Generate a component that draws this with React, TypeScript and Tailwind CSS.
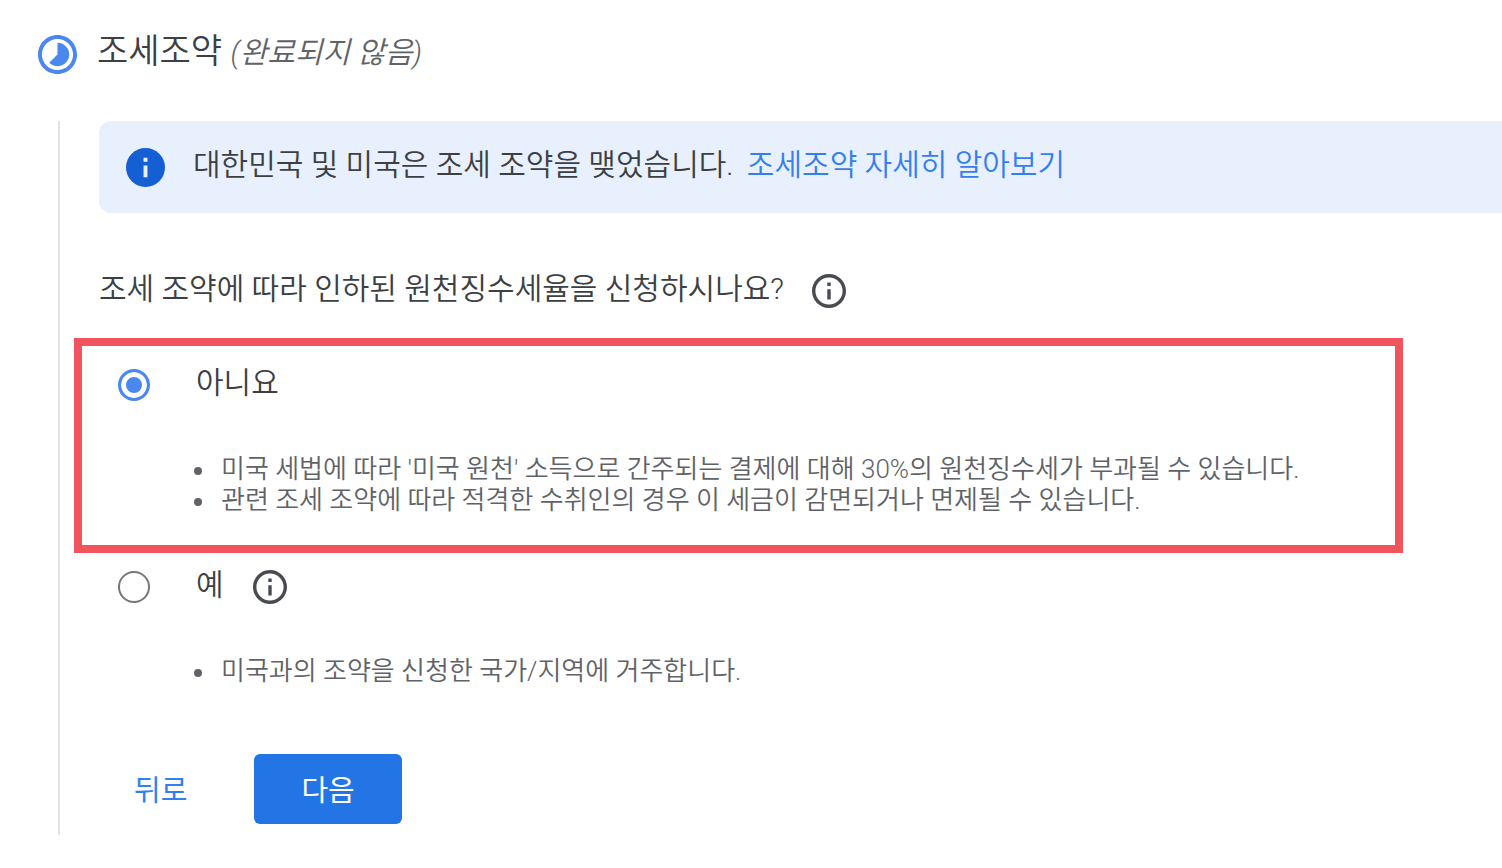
import { useState, type ReactNode } from "react";

function TimelapseIcon() {
  return (
    <svg viewBox="2 2 20 20" className="size-[39px] shrink-0 fill-[#4a88f0]" aria-hidden="true">
      <path d="M16.24 7.76A5.974 5.974 0 0 0 12 6v6l-4.24 4.24c2.34 2.34 6.14 2.34 8.49 0a5.99 5.99 0 0 0-.01-8.48zM12 2C6.48 2 2 6.48 2 12s4.48 10 10 10 10-4.48 10-10S17.52 2 12 2zm0 18c-4.42 0-8-3.58-8-8s3.58-8 8-8 8 3.58 8 8-3.58 8-8 8z" />
    </svg>
  );
}

function InfoFilledIcon() {
  return (
    <svg viewBox="2 2 20 20" className="size-[39px] shrink-0" aria-hidden="true">
      <circle cx="12" cy="12" r="10" fill="#145fd4" />
      <path fill="#e8f0fe" d="M11 7h2v2h-2zM11 11h2v6h-2z" />
    </svg>
  );
}

function InfoButton() {
  return (
    <button type="button" className="size-[34px] shrink-0" aria-label="정보">
      <svg viewBox="2 2 20 20" className="size-full fill-[#484b4f]" aria-hidden="true">
        <path d="M11 7h2v2h-2zm0 4h2v6h-2zm1-9C6.48 2 2 6.48 2 12s4.48 10 10 10 10-4.48 10-10S17.52 2 12 2zm0 18c-4.41 0-8-3.59-8-8s3.59-8 8-8 8 3.59 8 8-3.59 8-8 8z" />
      </svg>
    </button>
  );
}

const radioClass =
  "size-8 shrink-0 appearance-none rounded-full border-2 border-[#74777a] bg-white checked:border-3 checked:border-[#4a88f0] checked:bg-[#4a88f0] checked:shadow-[inset_0_0_0_5px_white]";

function Notes({ children }: { children: ReactNode }) {
  return (
    <ul className="mt-[49px] space-y-px pl-[76px] text-[26px] leading-[30px] text-[#5f6368]">
      {children}
    </ul>
  );
}

function Note({ children }: { children: string }) {
  return (
    <li className="flex gap-[19px]">
      <span className="mt-[13px] size-2 shrink-0 rounded-full bg-[#5f6368]" />
      <span>{children}</span>
    </li>
  );
}

export default function App() {
  const [claim, setClaim] = useState("no");

  return (
    <main className="min-h-screen bg-white pt-[33px] pl-[38px] pb-8 font-[Roboto,'Noto_Sans_CJK_KR',sans-serif] text-[30px] leading-10 font-[350] text-[#3c4043]">
      <h2 className="flex items-center gap-[20px]">
        <TimelapseIcon />
        <span className="pb-1 text-[34px] leading-9">
          조세조약 <em className="text-[30px] text-[#5f6368]">(완료되지 않음)</em>
        </span>
      </h2>

      <div className="mt-[46px] ml-5 border-l-2 border-[#e2e2e9] pb-[11px] pl-[39px]">
        <div className="flex items-center gap-[28px] rounded-l-xl bg-[#e8f0fe] py-[26px] pl-[27px]">
          <InfoFilledIcon />
          <p className="pb-1 leading-9">
            대한민국 및 미국은 조세 조약을 맺었습니다.{" "}
            <a href="#treaty" className="ml-1.5 text-[#347ff0]">
              조세조약 자세히 알아보기
            </a>
          </p>
        </div>

        <form>
          <fieldset>
            <legend className="flex items-center gap-[28px] pt-[58px]">
              <span className="pb-1 leading-9">조세 조약에 따라 인하된 원천징수세율을 신청하시나요?</span>
              <InfoButton />
            </legend>

            <div className="mt-[27px] mr-[99px] -ml-[25px] border-8 border-[#f2545d] px-[36px] pt-[19px] pb-[30px]">
              <div className="flex items-center gap-[46px]">
                <input id="claim-no" type="radio" name="claim" className={radioClass} checked={claim === "no"} onChange={() => setClaim("no")} />
                <label htmlFor="claim-no" className="pb-1 leading-9">아니요</label>
              </div>
              <Notes>
                <Note>미국 세법에 따라 '미국 원천' 소득으로 간주되는 결제에 대해 30%의 원천징수세가 부과될 수 있습니다.</Note>
                <Note>관련 조세 조약에 따라 적격한 수취인의 경우 이 세금이 감면되거나 면제될 수 있습니다.</Note>
              </Notes>
            </div>

            <div className="pt-[14px] pl-[19px]">
              <div className="flex items-center gap-[46px]">
                <input id="claim-yes" type="radio" name="claim" className={radioClass} checked={claim === "yes"} onChange={() => setClaim("yes")} />
                <div className="flex items-center gap-[29px]">
                  <label htmlFor="claim-yes" className="pb-1 leading-9">예</label>
                  <InfoButton />
                </div>
              </div>
              <Notes>
                <Note>미국과의 조약을 신청한 국가/지역에 거주합니다.</Note>
              </Notes>
            </div>
          </fieldset>

          <div className="mt-[68px] flex items-center gap-8 text-[29px] font-normal">
            <button type="button" className="h-[70px] pt-1 pr-[35px] pl-[35px] text-[#347ff0]">
              뒤로
            </button>
            <button type="button" className="h-[70px] rounded-md bg-[#2374e4] px-[47px] pt-1 text-white">
              다음
            </button>
          </div>
        </form>
      </div>
    </main>
  );
}
